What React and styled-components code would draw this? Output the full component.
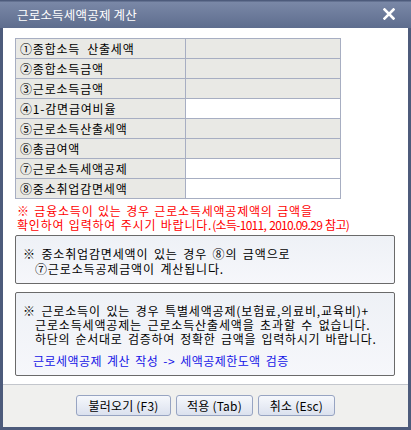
import styled, { createGlobalStyle } from "styled-components";

const GlobalStyle = createGlobalStyle`
    html, body {
        margin: 0;
        padding: 0;
        background: #ffffff;
    }
    * {
        box-sizing: border-box;
    }
`;

const rows = [
    { label: "①종합소득  산출세액", editable: false },
    { label: "②종합소득금액", editable: false },
    { label: "③근로소득금액", editable: false },
    { label: "④1-감면급여비율", editable: true },
    { label: "⑤근로소득산출세액", editable: false },
    { label: "⑥총급여액", editable: false },
    { label: "⑦근로소득세액공제", editable: true },
    { label: "⑧중소취업감면세액", editable: true },
];

export default function App() {
    return (
        <>
            <GlobalStyle />
            <Window>
                <TitleBar>
                    <Title>근로소득세액공제 계산</Title>
                    <CloseButton aria-label="close">
                        <svg width="12" height="12" viewBox="0 0 12 12">
                            <path d="M1.5 1.5 L10.5 10.5 M10.5 1.5 L1.5 10.5" stroke="#ffffff" strokeWidth="2.6" strokeLinecap="square" />
                        </svg>
                    </CloseButton>
                </TitleBar>
                <Content>
                    <Table>
                        <tbody>
                            {rows.map((row) => (
                                <tr key={row.label}>
                                    <LabelCell>{row.label}</LabelCell>
                                    <ValueCell $editable={row.editable} />
                                </tr>
                            ))}
                        </tbody>
                    </Table>
                    <Warning>
                        ※ 금융소득이 있는 경우 근로소득세액공제액의 금액을<br />
                        확인하여 입력하여 주시기 바랍니다.<Tight>(소득-1011, 2010.09.29 참고)</Tight>
                    </Warning>
                    <NoteBox $top="3px" $pad="10px 0 7px 7px">
                        <Line $height={15}>※ 중소취업감면세액이 있는 경우 ⑧의 금액으로</Line>
                        <Line $height={15} $indent>⑦근로소득공제금액이 계산됩니다.</Line>
                    </NoteBox>
                    <NoteBox $top="8px" $pad="11px 0 7px 7px">
                        <Line $height={14}>※ 근로소득이 있는 경우 특별세액공제(보험료,의료비,교육비)+</Line>
                        <Line $height={14} $indent>근로소득세액공제는 근로소득산출세액을 초과할 수 없습니다.</Line>
                        <Line $height={14} $indent $spacing={0.7}>하단의 순서대로 검증하여 정확한 금액을 입력하시기 바랍니다.</Line>
                        <LinkLine>근로세액공제 계산 작성 -&gt; 세액공제한도액 검증</LinkLine>
                    </NoteBox>
                </Content>
                <Footer>
                    <Button $width={95}>불러오기 (F3)</Button>
                    <Button $width={77}>적용 (Tab)</Button>
                    <Button $width={77}>취소 (Esc)</Button>
                </Footer>
            </Window>
        </>
    );
}

const Window = styled.div`
    width: 411px;
    height: 430px;
    display: flex;
    flex-direction: column;
    background: #4d5b7b;
    padding: 0 3px 3px 3px;
    font-family: "Noto Sans CJK KR", "Noto Sans", sans-serif;
`;

const TitleBar = styled.div`
    height: 28px;
    margin: 0 -3px;
    padding: 0 15px 0 17px;
    display: flex;
    align-items: center;
    justify-content: space-between;
    background: linear-gradient(#4d5b7b 0, #4d5b7b 1px, #7a88a7 2px, #5e6d8e 100%);
`;

const Title = styled.div`
    color: #ffffff;
    font-size: 12.5px;
    letter-spacing: 0.2px;
    line-height: 14px;
    padding-top: 1px;
`;

const CloseButton = styled.div`
    width: 14px;
    height: 14px;
    display: flex;
    align-items: center;
    justify-content: center;
`;

const Content = styled.div`
    flex: 1;
    background: #ffffff;
    padding: 10px 0 0 12px;
    border-bottom: 1px solid #c3c6cc;
`;

const Table = styled.table`
    border-collapse: collapse;
    width: 326px;
    table-layout: fixed;
    td {
        border: 1px solid #a7aec2;
        height: 20px;
        padding: 0;
    }
`;

const LabelCell = styled.td`
    width: 170px;
    background: #e9e9e5;
    padding-left: 4px !important;
    font-size: 12px;
    letter-spacing: 0.8px;
    line-height: 18px;
    color: #000000;
    white-space: pre;
`;

const ValueCell = styled.td`
    background: ${(p) => (p.$editable ? "#ffffff" : "#e9e9e5")};
`;

const Warning = styled.p`
    margin: 5px 0 0 2px;
    color: #ff0000;
    font-size: 12px;
    line-height: 14px;
    letter-spacing: 0.8px;
    word-spacing: 1px;
    white-space: nowrap;
`;

const Tight = styled.span`
    letter-spacing: -0.7px;
`;

const NoteBox = styled.div`
    width: 380px;
    margin-top: ${(p) => p.$top};
    padding: ${(p) => p.$pad};
    border: 1px solid #6a6a6a;
    border-radius: 2px;
    background: linear-gradient(#eef1f6, #f6f7fb);
`;

const Line = styled.div`
    font-size: 12px;
    line-height: ${(p) => p.$height}px;
    color: #000000;
    letter-spacing: ${(p) => p.$spacing ?? 0.85}px;
    word-spacing: 2px;
    padding-left: ${(p) => (p.$indent ? "12px" : "0")};
    white-space: nowrap;
`;

const LinkLine = styled.div`
    margin-top: 8px;
    padding-left: 10px;
    font-size: 12px;
    line-height: 14px;
    color: #1414e6;
    letter-spacing: 0.45px;
    word-spacing: 2px;
    white-space: nowrap;
`;

const Footer = styled.div`
    height: 42px;
    background: #f0f0ee;
    display: flex;
    justify-content: center;
    align-items: flex-start;
    gap: 5px;
    padding-top: 10px;
`;

const Button = styled.button`
    width: ${(p) => p.$width}px;
    height: 21px;
    padding: 0;
    border: 1px solid #97a4c2;
    border-radius: 3px;
    background: linear-gradient(#f6f8fc, #dbe1ee);
    font-family: "Noto Sans CJK KR", "Noto Sans", sans-serif;
    font-size: 12px;
    line-height: 18px;
    color: #000000;
    letter-spacing: 0.2px;
`;
